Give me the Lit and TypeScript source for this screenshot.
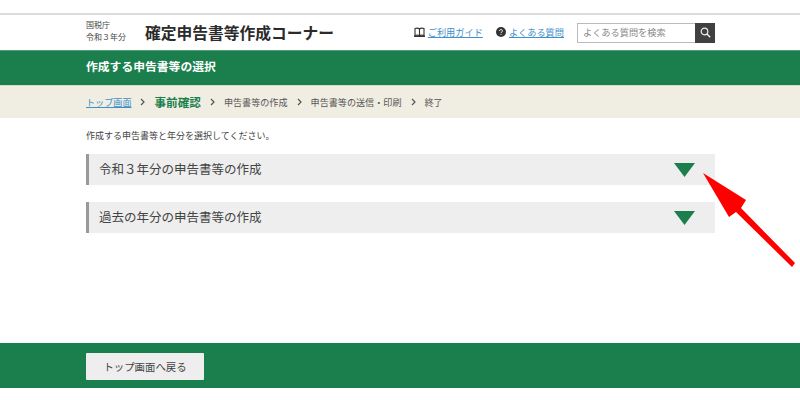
import { LitElement, html, css } from "lit";
import { customElement } from "lit/decorators.js";

@customElement("app-root")
export class AppRoot extends LitElement {
  static styles = css`
    :host {
      display: block;
      position: relative;
      width: 800px;
      height: 400px;
      overflow: hidden;
      background: #fff;
      color: #333;
      font-family: "Noto Sans CJK JP", "Liberation Sans", sans-serif;
    }
    * { box-sizing: border-box; }
    a { color: #3f8fcb; text-decoration: underline; }
    .page { display: flex; flex-direction: column; height: 400px; padding-top: 13px; padding-bottom: 12px; }
    .wrap { width: 629px; margin-left: 86px; }
    .topline { height: 2px; background: #dcdcdc; }
    .header { height: 35px; }
    .header .wrap { height: 100%; display: flex; align-items: center; }
    .org { width: 59px; font-size: 8px; line-height: 12px; color: #444; margin-top: -3px; }
    .title { font-size: 15.75px; font-weight: 700; color: #2b2b2b; white-space: nowrap; letter-spacing: 0; }
    .links { margin-left: auto; display: flex; align-items: center; font-size: 9.2px; }
    .link { display: flex; align-items: center; gap: 3px; white-space: nowrap; margin-top: -2px; }
    .link + .link { margin-left: 13px; }
    .search { display: flex; width: 138px; height: 20px; margin-left: 13px; border: 1px solid #bbb; border-right: 0; background: #fff; }
    .search .ph { flex: 1; padding-left: 5px; font-size: 9.2px; line-height: 17px; color: #888; }
    .search .btn { width: 20px; margin: -1px 0; background: #404040; display: flex; align-items: center; justify-content: center; }
    .band { height: 35px; background: #1a7f4d; border-top: 1px solid #4fa077; display: flex; align-items: center; padding-bottom: 4px; }
    .band h1 { margin: 0; font-size: 11.8px; font-weight: 700; color: #fff; line-height: 1; }
    .crumbs { height: 33px; background: #f0ede2; border-top: 1px solid #cfdcc9; }
    .crumbs .wrap { height: 100%; display: flex; align-items: center; font-size: 9.1px; color: #555; white-space: nowrap; }
    .crumbs svg { margin: 0 8px; flex: none; }
    .crumbs .now { font-size: 11.6px; font-weight: 700; color: #1a7f4d; }
    .intro { margin-top: 11px; font-size: 9px; line-height: 13px; color: #444; }
    .acc {
      height: 31px;
      margin-top: 12px;
      background: #eeeeee;
      border-left: 3px solid #999;
      padding: 0 20px 0 10px;
      display: flex;
      align-items: center;
      justify-content: space-between;
      font-size: 12.5px;
      color: #444;
    }
    .acc span { margin-top: -3px; }
    .acc + .acc { margin-top: 17px; }
    .tri { width: 21px; height: 14px; flex: none; margin-top: 1px; }
    .footer { margin-top: auto; height: 45px; background: #1a7f4d; display: flex; align-items: center; padding-top: 1px; }
    .back {
      width: 118px;
      height: 27px;
      background: #eee;
      border-radius: 1px;
      font-size: 10.4px;
      color: #444;
      display: flex;
      align-items: center;
      justify-content: center;
    }
    .arrow { position: absolute; left: 700px; top: 170px; width: 100px; height: 100px; }
  `;

  private chevron() {
    return html`<svg width="7" height="8" viewBox="0 0 7 8"><path d="M2 1l3 3-3 3" fill="none" stroke="#555" stroke-width="1.2"/></svg>`;
  }

  private triangle() {
    return html`<svg class="tri" viewBox="0 0 21 14"><path d="M0 0H21L10.5 14Z" fill="#1a7f4d"/></svg>`;
  }

  render() {
    return html`
      <div class="page">
        <div class="topline"></div>
        <header class="header">
          <div class="wrap">
            <div class="org">国税庁<br />令和３年分</div>
            <div class="title">確定申告書等作成コーナー</div>
            <div class="links">
              <div class="link">
                <svg width="11" height="10" viewBox="0 0 11 10"><path d="M5.5 2C4.5 1 2.5 1 1 1.5V8.5C2.5 8 4.5 8 5.5 9C6.5 8 8.5 8 10 8.5V1.5C8.5 1 6.5 1 5.5 2ZM5.5 2V9M.5 8.5V9.5H10.5V8.5" fill="none" stroke="#333" stroke-width="1.1"/></svg>
                <a>ご利用ガイド</a>
              </div>
              <div class="link">
                <svg width="10" height="10" viewBox="0 0 10 10"><circle cx="5" cy="5" r="5" fill="#333"/><path d="M3.5 4C3.5 2 6.6 2.2 6.5 4C6.4 5 5 5 5 6" fill="none" stroke="#fff" stroke-width="1"/><rect x="4.5" y="6.8" width="1" height="1" fill="#fff"/></svg>
                <a>よくある質問</a>
              </div>
              <div class="search">
                <div class="ph">よくある質問を検索</div>
                <div class="btn">
                  <svg width="11" height="11" viewBox="0 0 11 11"><circle cx="4.5" cy="4.5" r="3.3" fill="none" stroke="#eee" stroke-width="1.2"/><path d="M7 7l3.2 3.2" stroke="#eee" stroke-width="1.4"/></svg>
                </div>
              </div>
            </div>
          </div>
        </header>
        <div class="band"><div class="wrap"><h1>作成する申告書等の選択</h1></div></div>
        <nav class="crumbs">
          <div class="wrap">
            <a>トップ画面</a>${this.chevron()}
            <span class="now">事前確認</span>${this.chevron()}
            <span>申告書等の作成</span>${this.chevron()}
            <span>申告書等の送信・印刷</span>${this.chevron()}
            <span>終了</span>
          </div>
        </nav>
        <div class="wrap">
          <div class="intro">作成する申告書等と年分を選択してください。</div>
          <div class="acc"><span>令和３年分の申告書等の作成</span>${this.triangle()}</div>
          <div class="acc"><span>過去の年分の申告書等の作成</span>${this.triangle()}</div>
        </div>
        <footer class="footer"><div class="wrap"><div class="back">トップ画面へ戻る</div></div></footer>
      </div>
      <svg class="arrow" viewBox="0 0 100 100">
        <path d="M3 3L46 30L41 38L95 93L92 97L36 42L29 47Z" fill="#ff0000"/>
      </svg>
    `;
  }
}
